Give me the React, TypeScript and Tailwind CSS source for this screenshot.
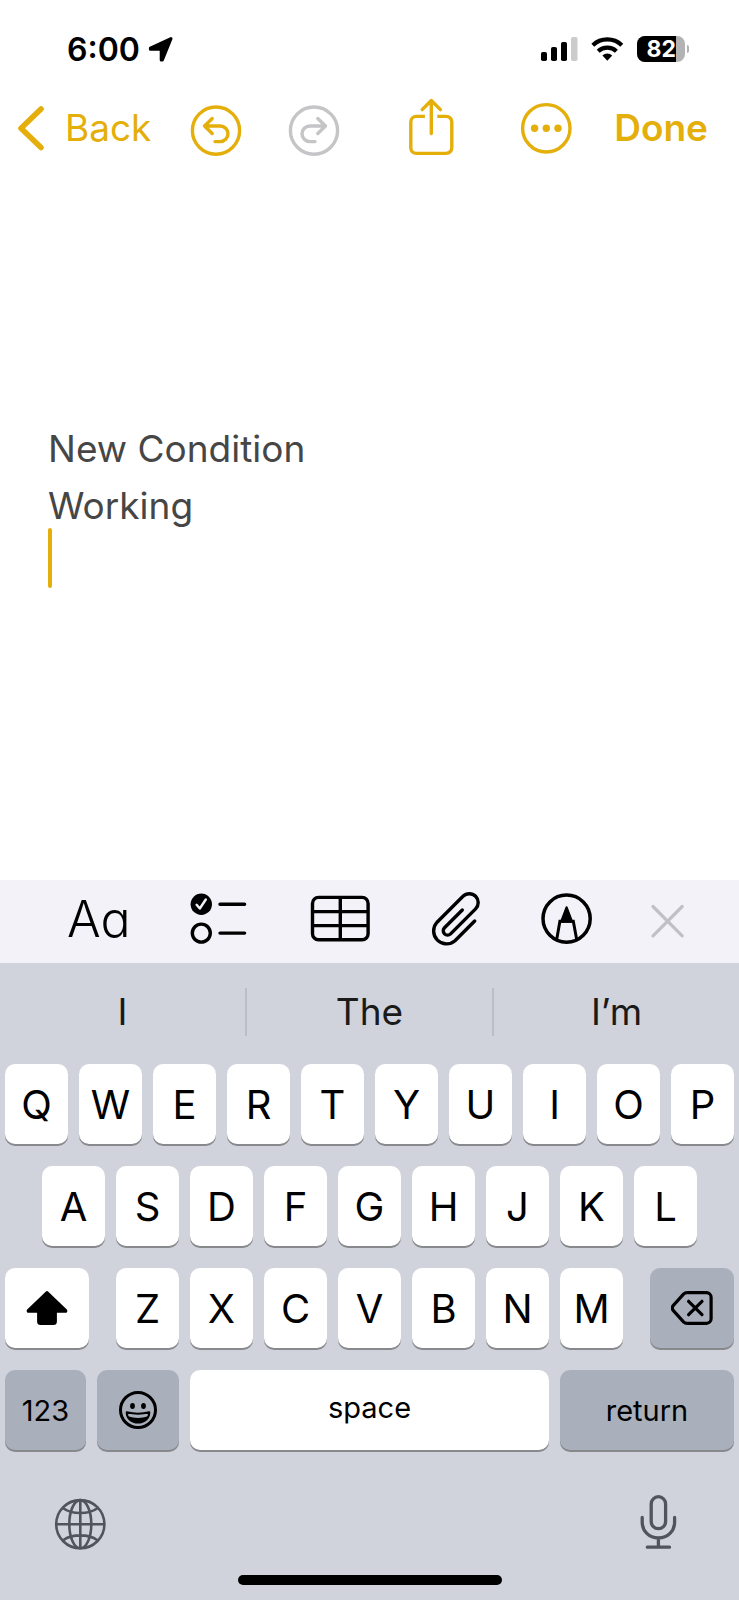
import React from 'react'

const ROW_ONE = ['Q', 'W', 'E', 'R', 'T', 'Y', 'U', 'I', 'O', 'P']
const ROW_TWO = ['A', 'S', 'D', 'F', 'G', 'H', 'J', 'K', 'L']
const ROW_THREE = ['Z', 'X', 'C', 'V', 'B', 'N', 'M']

const KEY = 'flex h-20 items-center justify-center rounded-[10px] shadow-[0_2px_0_#88898d]'
const LETTER = `${KEY} min-w-0 flex-1 bg-white pt-0.5 text-[40px]`

function Letters({ keys }: { keys: string[] }) {
  return (
    <>
      {keys.map((k) => (
        <button key={k} type="button" className={LETTER}>{k}</button>
      ))}
    </>
  )
}

function StatusBar() {
  return (
    <div className="flex h-[30px] items-center justify-between pl-[67px] pr-[50px]">
      <div className="flex items-center gap-2">
        <span className="pt-0.5 text-[32px] font-semibold leading-[30px]">6:00</span>
        <svg width="26" height="27" viewBox="0 0 26 27" stroke="black" strokeWidth="3" strokeLinejoin="round">
          <path d="M23 2.6 2.4 12v1.200h10.800v10.800h1.200z" />
        </svg>
      </div>
      <div className="flex items-center gap-[13px]">
        <svg width="38" height="26" viewBox="0 0 38 26">
          <rect x="1" y="16" width="6" height="9" rx="1.8" />
          <rect x="11" y="11" width="6" height="14" rx="1.8" />
          <rect x="21" y="6" width="6" height="19" rx="1.8" />
          <rect x="31" y="1" width="6.5" height="24" rx="1.8" fill="#cccccc" />
        </svg>
        <svg width="33" height="26" viewBox="0 0 33 26" fill="none" stroke="black" strokeWidth="4.2">
          <path d="M1.8 9.2a21 21 0 0 1 29 0" />
          <path d="M7.2 15.2a13.2 13.2 0 0 1 18.2 0" />
          <path d="M16.3 24.8 11.4 19.4a7.3 7.3 0 0 1 9.8 0z" fill="black" stroke="none" />
        </svg>
        <div className="flex items-center gap-[2px]">
          <div className="flex h-[26px] w-12 rounded-[8px] bg-[#b3b3b3]">
            <span className="w-[39px] rounded-l-[8px] bg-black text-right text-[23px] font-bold leading-[26px] text-white">82</span>
          </div>
          <div className="h-2 w-[2px] rounded-r-full bg-[#b3b3b3]" />
        </div>
      </div>
    </div>
  )
}

function NavBar() {
  return (
    <nav className="mt-[34px] flex h-[60px] items-center justify-between pl-4 pr-[31px] text-[37px] text-[#e4af0a]">
      <div className="flex items-center">
        <button type="button" className="flex w-[174px] items-center gap-[21px]">
          <svg width="28" height="60" viewBox="0 0 28 60" fill="none" stroke="currentColor" strokeWidth="5.6" strokeLinecap="round" strokeLinejoin="round">
            <path d="M25 11 5 30.200 25 49.500" />
          </svg>
          Back
        </button>
        <div className="flex gap-[46px]">
          <button type="button" aria-label="Undo">
            <svg width="52" height="60" viewBox="0 0 52 60" fill="none" stroke="currentColor" strokeWidth="3.4" strokeLinecap="round" strokeLinejoin="round">
              <circle cx="26" cy="32.6" r="23.6" />
              <path d="M22.2 20.5 14.5 28l7.7 7.5M14.5 28H30.2a7.8 7.8 0 0 1 0 15.6H25" />
            </svg>
          </button>
          <button type="button" aria-label="Redo" className="text-[#c5c5c7]">
            <svg width="52" height="60" viewBox="0 0 52 60" fill="none" stroke="currentColor" strokeWidth="3.4" strokeLinecap="round" strokeLinejoin="round">
              <circle cx="26" cy="32.6" r="23.6" />
              <path d="M29.8 20.5 37.5 28l-7.7 7.5M37.5 28H21.8a7.8 7.8 0 0 0 0 15.6H27" />
            </svg>
          </button>
        </div>
      </div>
      <div className="flex items-center">
        <button type="button" aria-label="Share" className="mr-16">
          <svg width="48" height="60" viewBox="0 0 48 60" fill="none" stroke="currentColor" strokeWidth="3.4" strokeLinejoin="round">
            <path d="M16.9 18.4H8.4a5.6 5.6 0 0 0-5.6 5.6v25.8a5.6 5.6 0 0 0 5.6 5.6h29.8a5.6 5.6 0 0 0 5.6-5.6V24a5.6 5.6 0 0 0-5.6-5.6h-8.9" />
            <path d="M23.3 35.5V3M14.2 11.6l9.1-9.1 9.1 9.1" strokeLinecap="round" />
          </svg>
        </button>
        <button type="button" aria-label="More" className="mr-[42px]">
          <svg width="52" height="60" viewBox="0 0 52 60" fill="none" stroke="currentColor" strokeWidth="3.4">
            <circle cx="26.3" cy="30.3" r="23.7" />
            <g fill="currentColor" stroke="none">
              <circle cx="14.6" cy="30.2" r="3.7" />
              <circle cx="26.3" cy="30.2" r="3.7" />
              <circle cx="38" cy="30.2" r="3.7" />
            </g>
          </svg>
        </button>
        <button type="button" className="font-semibold">Done</button>
      </div>
    </nav>
  )
}

function FormatBar() {
  return (
    <div className="flex h-[83px] items-center justify-between bg-[#f3f2f8] pl-[67px] pr-[53px]">
      <button type="button" aria-label="Text format" className="w-16 pb-1 text-left text-[50px] font-[350] leading-[53px] [font-feature-settings:'cv11']">Aa</button>
      <button type="button" aria-label="Checklist">
        <svg width="62" height="57" viewBox="0 0 62 57" fill="none" stroke="black" strokeWidth="3.4" strokeLinecap="round" strokeLinejoin="round">
          <circle cx="12.3" cy="11.2" r="10.7" fill="black" stroke="none" />
          <path d="M7.6 11.8l3.2 3.7 6-9" stroke="#f3f2f8" strokeWidth="2.4" />
          <circle cx="12.3" cy="40.1" r="9" />
          <path d="M31 11.2h24.6M31 40.1h24.6" />
        </svg>
      </button>
      <button type="button" aria-label="Table">
        <svg width="65" height="57" viewBox="0 0 65 57" fill="none" stroke="black" strokeWidth="3.4">
          <rect x="3.5" y="4.4" width="55.6" height="42.4" rx="6" />
          <path d="M3.5 18.6h55.6M3.5 32.6h55.6M31.3 4.4v42.4" />
        </svg>
      </button>
      <button type="button" aria-label="Attach">
        <svg className="overflow-visible" width="51" height="57" viewBox="0 0 51 57" fill="none" stroke="black" strokeWidth="3.4" strokeLinecap="round" strokeLinejoin="round">
          <path d="M42.7 28 23 47.7A12.9 12.9 0 0 1 4.8 29.5L31 3.3A8.9 8.9 0 0 1 43.6 15.9L18.6 40.9A4.3 4.3 0 0 1 12.5 34.8L30.3 17" />
        </svg>
      </button>
      <button type="button" aria-label="Markup">
        <svg width="51" height="57" viewBox="0 0 51 57" fill="none" stroke="black" strokeWidth="3.5">
          <circle cx="25.6" cy="25.6" r="23.6" />
          <path d="M25.6 14.2 20 28.800h11.200z" fill="black" strokeWidth="2" strokeLinejoin="round" />
          <path d="M15.8 46 18.900 28.200h13.400L35.600 46" strokeWidth="3" />
        </svg>
      </button>
      <button type="button" aria-label="Close">
        <svg width="36" height="57" viewBox="0 0 36 57" fill="none" stroke="#c1c0c6" strokeWidth="3.2" strokeLinecap="round">
          <path d="M3 13.5 32.2 42.8M32.2 13.5 3 42.8" />
        </svg>
      </button>
    </div>
  )
}

function Keyboard() {
  return (
    <div className="bg-[#d0d3db] pb-[15px]">
      {/* word suggestions */}
      <div className="flex pb-7 pt-[25px] text-[37px] text-[#1a1a1a]">
        <button type="button" className="h-12 flex-1 border-r-2 border-[#bcbec3] leading-[48px]">I</button>
        <button type="button" className="h-12 flex-1 border-r-2 border-[#bcbec3] leading-[48px]">The</button>
        <button type="button" className="h-12 flex-1 leading-[48px]">I’m</button>
      </div>

      <div className="flex flex-col gap-[22px] px-[5px]">
        <div className="flex gap-[11px]">
          <Letters keys={ROW_ONE} />
        </div>
        <div className="flex gap-[11px] px-[37px]">
          <Letters keys={ROW_TWO} />
        </div>
        <div className="flex gap-[27px]">
          <button type="button" aria-label="Shift" className={`${KEY} w-[84px] bg-white`}>
            <svg width="42" height="36" viewBox="0 0 42 36" stroke="black" strokeWidth="3" strokeLinejoin="round">
              <path d="M21 2.5 2.2 20.6v.6H12.6V31.4q0 2 2 2H27.4q2 0 2-2V21.2H39.8v-.6z" />
            </svg>
          </button>
          <div className="flex flex-1 gap-[11px]">
            <Letters keys={ROW_THREE} />
          </div>
          <button type="button" aria-label="Delete" className={`${KEY} w-[84px] bg-[#a9afbb]`}>
            <svg width="42" height="34" viewBox="0 0 42 34" fill="none" stroke="black" strokeWidth="3.2" strokeLinecap="round">
              <path d="M16 1.7h19.5a4.6 4.6 0 0 1 4.6 4.6v21.4a4.6 4.6 0 0 1-4.6 4.6H16c-1.4 0-2.5-.5-3.5-1.5L2.6 19.9c-1.7-1.8-1.7-4 0-5.8L12.5 3.2c1-1 2.1-1.5 3.5-1.5z" />
              <path d="M17.600 10.300 31 23.700M31 10.300 17.600 23.700" />
            </svg>
          </button>
        </div>
        <div className="flex gap-[11px] text-[29px]">
          <button type="button" className={`${KEY} w-[81px] bg-[#a9afbb] pt-0.5`}>123</button>
          <button type="button" aria-label="Emoji" className={`${KEY} w-[82px] bg-[#a9afbb]`}>
            <svg width="38" height="38" viewBox="0 0 38 38" fill="none" stroke="black">
              <circle cx="19" cy="19" r="17.5" strokeWidth="3" />
              <ellipse cx="13.5" cy="15" rx="2.4" ry="3" fill="black" stroke="none" />
              <ellipse cx="24.5" cy="15" rx="2.4" ry="3" fill="black" stroke="none" />
              <path d="M7.7 21.3q11.3 2.800 22.600 0c0 6-4.800 10.200-11.300 10.200s-11.300-4.200-11.300-10.200z" strokeWidth="2" strokeLinejoin="round" />
              <path d="M9 25.200q10 3.600 20 0c-1.500 4.200-5.200 6.500-10 6.500s-8.500-2.300-10-6.500z" fill="black" stroke="none" />
            </svg>
          </button>
          <button type="button" className={`${KEY} flex-1 bg-white pb-1`}>space</button>
          <button type="button" className={`${KEY} w-[174px] bg-[#a9afbb] pt-0.5`}>return</button>
        </div>
      </div>

      <div className="mt-11 flex items-end justify-between pl-[54px] pr-[62px] text-[#50545e]">
        <button type="button" aria-label="Next keyboard">
          <svg width="52" height="52" viewBox="0 0 52 52" fill="none" stroke="currentColor" strokeWidth="2.6">
            <circle cx="26.3" cy="26.2" r="24.1" />
            <ellipse cx="26.3" cy="26.2" rx="11" ry="24.1" />
            <path d="M26.3 2v48.4M2.2 26.2h48.2M9.2 10.2c8.8 6.400 25.400 6.400 34.200 0M9.200 42.200c8.800-6.400 25.400-6.400 34.200 0" />
          </svg>
        </button>
        <button type="button" aria-label="Dictate">
          <svg width="37" height="56" viewBox="0 0 37 56" fill="none" stroke="currentColor" strokeWidth="3.3" strokeLinecap="round">
            <rect x="11.2" y="2.7" width="14.4" height="32" rx="7.2" />
            <path d="M2.2 23.5v4.500c0 9.200 6.800 16 16.200 16s16.200-6.800 16.200-16v-4.500M18.400 44v9M7.300 53.200h22.200" />
          </svg>
        </button>
      </div>
      <div className="mx-auto mt-[25px] h-[10px] w-[264px] rounded-full bg-black" />
    </div>
  )
}

function App() {
  return (
    <div className="flex min-h-screen flex-col bg-white pt-[34px] font-[Inter,sans-serif] text-black">
      <StatusBar />
      <NavBar />
      <main className="flex-1 px-12 pt-[262px]">
        <textarea
          aria-label="Note"
          defaultValue={'New Condition\nWorking'}
          className="block h-[108px] w-full resize-none overflow-hidden text-[37px] leading-[57px] text-[#464646] outline-none"
        />
        {/* text cursor */}
        <div className="h-[60px] w-1 rounded-full bg-[#e4af0a]" />
      </main>
      <FormatBar />
      <Keyboard />
    </div>
  )
}

export default App
